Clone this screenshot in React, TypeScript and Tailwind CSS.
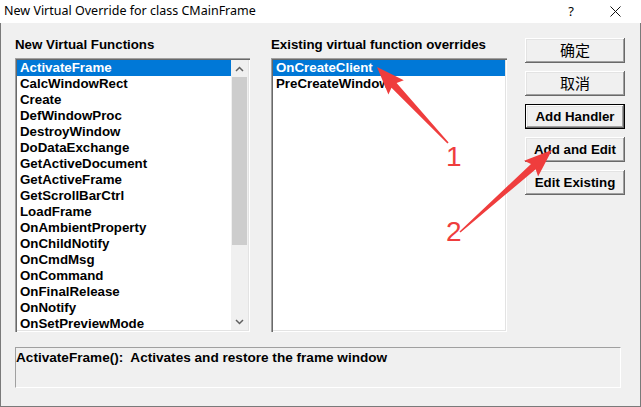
import React from "react";

const ui = { fontFamily: '"Liberation Sans", Arial, sans-serif' };
const cjk = { fontFamily: '"Noto Sans CJK SC", "Noto Sans", sans-serif' };

const funcs = [
  "ActivateFrame",
  "CalcWindowRect",
  "Create",
  "DefWindowProc",
  "DestroyWindow",
  "DoDataExchange",
  "GetActiveDocument",
  "GetActiveFrame",
  "GetScrollBarCtrl",
  "LoadFrame",
  "OnAmbientProperty",
  "OnChildNotify",
  "OnCmdMsg",
  "OnCommand",
  "OnFinalRelease",
  "OnNotify",
  "OnSetPreviewMode",
];

const overrides = ["OnCreateClient", "PreCreateWindow"];

// tapered arrow, tail -> tip
function arrowPoints(tx: number, ty: number, px: number, py: number) {
  const dx = px - tx, dy = py - ty;
  const len = Math.hypot(dx, dy);
  const ux = dx / len, uy = dy / len;
  const nx = -uy, ny = ux;
  const L = 25, W = 10.5, w1 = 3.5, w0 = 0.8;
  const bx = px - ux * L, by = py - uy * L;
  const pts = [
    [tx + nx * w0, ty + ny * w0],
    [bx + nx * w1, by + ny * w1],
    [bx + nx * W - ux * 3, by + ny * W - uy * 3],
    [px, py],
    [bx - nx * W - ux * 3, by - ny * W - uy * 3],
    [bx - nx * w1, by - ny * w1],
    [tx - nx * w0, ty - ny * w0],
  ];
  return pts.map(p => p.map(v => v.toFixed(1)).join(",")).join(" ");
}

const sunken =
  "shadow-[inset_1px_1px_0_#a0a0a0,inset_2px_2px_0_#696969,inset_-1px_-1px_0_#ffffff,inset_-2px_-2px_0_#e3e3e3]";
const raised =
  "shadow-[inset_-1px_-1px_0_#696969,inset_1px_1px_0_#ffffff,inset_-2px_-2px_0_#a0a0a0,inset_2px_2px_0_#e3e3e3]";

function Chevron({ down }: { down?: boolean }) {
  return (
    <svg width="9" height="6" viewBox="0 0 9 6">
      <path
        d={down ? "M1 1 L4.5 4.5 L8 1" : "M1 5 L4.5 1.5 L8 5"}
        fill="none"
        stroke="#606060"
        strokeWidth="1.5"
      />
    </svg>
  );
}

function Btn({ label, def, zh }: { label: string; def?: boolean; zh?: boolean }) {
  return (
    <div className={def ? "border border-black" : ""}>
      <div
        className={`flex items-center justify-center bg-[#f0f0f0] text-black ${raised} ${
          def ? "h-[23px]" : "h-[25px]"
        } ${zh ? "text-[15px]" : "text-[13.3px] font-bold"}`}
        style={zh ? cjk : ui}
      >
        {label}
      </div>
    </div>
  );
}

function Item({ text, sel }: { text: string; sel?: boolean }) {
  return (
    <div
      className={`h-[16px] shrink-0 pl-[3px] text-[13.3px] font-bold leading-[16px] whitespace-nowrap ${
        sel ? "bg-[#0078d7] text-white" : "text-black"
      }`}
    >
      {text}
    </div>
  );
}

export default function App() {
  return (
    <div className="relative h-[407px] w-[641px] overflow-hidden bg-[#f0f0f0]" style={ui}>
      {/* title bar */}
      <div className="flex h-[23px] items-center bg-white pl-[4px] text-black">
        <span className="text-[12.5px]" style={{ fontFamily: '"Noto Sans", "Liberation Sans", sans-serif' }}>
          New Virtual Override for class CMainFrame
        </span>
        <span className="ml-auto mr-[36px] text-[13px]" style={{ fontFamily: '"Noto Sans", sans-serif' }}>?</span>
        <svg width="11" height="11" viewBox="0 0 11 11" className="mr-[20px]">
          <path d="M0.5 0.5 L10.5 10.5 M10.5 0.5 L0.5 10.5" stroke="#111" strokeWidth="1" />
        </svg>
      </div>

      {/* body */}
      <div className="h-[384px] border-x border-b border-[#7a7a7a] pl-[14px]">
        <div className="flex">
          <div className="flex w-[235px] flex-col pt-[14px]">
            <div className="h-[16px] text-[13.3px] font-bold leading-[16px] text-black">New Virtual Functions</div>
            <div className={`mt-[5px] flex h-[274px] bg-white p-[2px] ${sunken}`}>
              <div className="flex min-w-0 flex-1 flex-col overflow-hidden">
                {funcs.map((f, i) => (
                  <Item key={f} text={f} sel={i === 0} />
                ))}
              </div>
              <div className="flex w-[17px] flex-col bg-[#f0f0f0]">
                <div className="flex h-[17px] items-center justify-center">
                  <Chevron />
                </div>
                <div className="mx-[1px] h-[168px] bg-[#cdcdcd]" />
                <div className="flex-1" />
                <div className="flex h-[17px] items-center justify-center">
                  <Chevron down />
                </div>
              </div>
            </div>
          </div>

          <div className="ml-[21px] flex w-[236px] flex-col pt-[14px]">
            <div className="h-[16px] text-[13.3px] font-bold leading-[16px] text-black">
              Existing virtual function overrides
            </div>
            <div className={`mt-[5px] flex h-[274px] flex-col bg-white p-[2px] ${sunken}`}>
              {overrides.map((f, i) => (
                <Item key={f} text={f} sel={i === 0} />
              ))}
            </div>
          </div>

          <div className="ml-[18px] flex w-[100px] flex-col gap-[8px] pt-[15px]">
            <Btn label="确定" zh />
            <Btn label="取消" zh />
            <Btn label="Add Handler" def />
            <Btn label="Add and Edit" />
            <Btn label="Edit Existing" />
          </div>
        </div>

        <div className="mt-[15px] h-[41px] w-[606px] border-b border-l border-r border-t border-b-white border-l-[#a0a0a0] border-r-white border-t-[#a0a0a0] pt-[2px]">
          <div className="text-[13.6px] font-bold leading-[16px] text-black">
            ActivateFrame():&nbsp; Activates and restore the frame window
          </div>
        </div>
      </div>

      {/* annotations */}
      <svg className="pointer-events-none absolute left-0 top-0" width="641" height="407">
        <polygon points={arrowPoints(448, 143, 377, 67)} fill="#ef3d3d" />
        <polygon points={arrowPoints(460, 232, 552, 150)} fill="#ef3d3d" />
      </svg>
      <div className="pointer-events-none absolute left-[446px] top-[143px] text-[28px] leading-none text-[#ef3d3d]">
        1
      </div>
      <div className="pointer-events-none absolute left-[446px] top-[218px] text-[28px] leading-none text-[#ef3d3d]">
        2
      </div>
    </div>
  );
}
